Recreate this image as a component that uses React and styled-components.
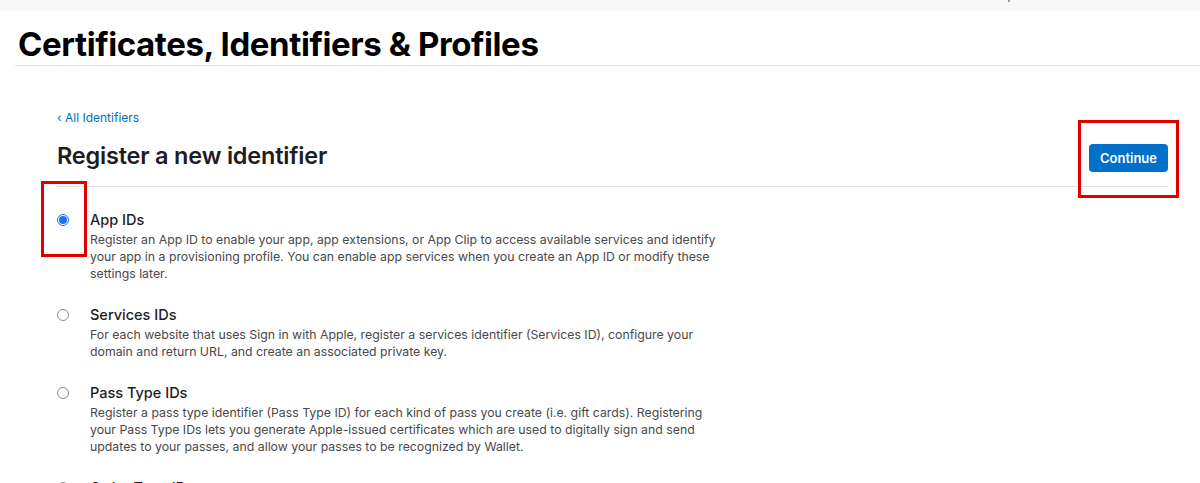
import React from "react";
import styled, { createGlobalStyle } from "styled-components";

const Global = createGlobalStyle`
  html, body { margin: 0; padding: 0; background: #fff; }
  body { font-family: Inter, "Noto Sans", sans-serif; color: #1d1d1f; overflow: hidden; }
  * { box-sizing: border-box; }
`;

const Page = styled.div`
  width: 1200px;
  height: 483px;
  overflow: hidden;
  position: relative;
`;

const TopBar = styled.div`
  height: 10px;
  background: #f8f8f8;
  border-bottom: 1px solid #f2f2f2;
`;

const Header = styled.header`
  margin-left: 15px;
  padding: 14px 0 1px 3px;
  border-bottom: 1px solid #e2e2e2;
`;

const PageTitle = styled.h1`
  margin: 0;
  font-size: 33px;
  line-height: 40px;
  font-weight: 700;
  letter-spacing: -0.4px;
  color: #000;
`;

const Main = styled.main`
  margin: 0 32px 0 57px;
  padding-top: 44px;
`;

const TitleRow = styled.div`
  display: flex;
  align-items: flex-end;
  justify-content: space-between;
  padding-bottom: 16px;
  border-bottom: 1px solid #e2e2e2;
`;

const BackLink = styled.a`
  display: block;
  font-size: 12px;
  line-height: 16px;
  color: #0070c9;
  text-decoration: none;
`;

const SubTitle = styled.h2`
  margin: 16px 0 0;
  font-size: 23.5px;
  line-height: 28px;
  font-weight: 600;
  letter-spacing: -0.2px;
  color: #1d1d1f;
`;

const PrimaryButton = styled.button`
  height: 28px;
  padding: 0 11px;
  margin-bottom: -2px;
  border: none;
  border-radius: 4px;
  background: #0070c9;
  color: #fff;
  font-family: inherit;
  font-size: 13px;
  font-weight: 600;
`;

const OptionList = styled.div`
  display: flex;
  flex-direction: column;
  gap: 24px;
  padding-top: 24px;
`;

const Option = styled.label`
  display: grid;
  grid-template-columns: 33px 1fr;
  align-items: start;
`;

const Radio = styled.span`
  width: 12px;
  height: 12px;
  margin-top: 3px;
  border-radius: 50%;
  border: 1px solid ${(p) => (p.checked ? "#1a73e8" : "#8e8e8e")};
  background: #fff;
  display: flex;
  align-items: center;
  justify-content: center;
  &::after {
    content: "";
    width: 8px;
    height: 8px;
    border-radius: 50%;
    background: ${(p) => (p.checked ? "#1a73e8" : "transparent")};
  }
`;

const OptionBody = styled.div`
  max-width: 640px;
`;

const OptionTitle = styled.div`
  font-size: 14.5px;
  line-height: 18px;
  font-weight: 500;
  color: #1d1d1f;
`;

const OptionDesc = styled.p`
  margin: 2px 0 0;
  font-size: 12.3px;
  line-height: 17px;
  color: #494949;
`;

const Annotation = styled.div`
  position: absolute;
  border: 3px solid #e00000;
  pointer-events: none;
`;

const Marker = styled.span`
  position: absolute;
  top: 0;
  left: 1008px;
  width: 2px;
  height: 2px;
  background: #999;
`;

const options = [
  {
    title: "App IDs",
    desc: "Register an App ID to enable your app, app extensions, or App Clip to access available services and identify your app in a provisioning profile. You can enable app services when you create an App ID or modify these settings later.",
    checked: true,
  },
  {
    title: "Services IDs",
    desc: "For each website that uses Sign in with Apple, register a services identifier (Services ID), configure your domain and return URL, and create an associated private key.",
  },
  {
    title: "Pass Type IDs",
    desc: "Register a pass type identifier (Pass Type ID) for each kind of pass you create (i.e. gift cards). Registering your Pass Type IDs lets you generate Apple-issued certificates which are used to digitally sign and send updates to your passes, and allow your passes to be recognized by Wallet.",
  },
  {
    title: "Order Type IDs",
    desc: "Register an order type identifier (Order Type ID) to enable order tracking in Wallet.",
  },
];

export default function App() {
  return (
    <Page>
      <Global />
      <TopBar />
      <Marker />
      <Header>
        <PageTitle>Certificates, Identifiers &amp; Profiles</PageTitle>
      </Header>
      <Main>
        <TitleRow>
          <div>
            <BackLink href="#">‹ All Identifiers</BackLink>
            <SubTitle>Register a new identifier</SubTitle>
          </div>
          <PrimaryButton>Continue</PrimaryButton>
        </TitleRow>
        <OptionList>
          {options.map((o) => (
            <Option key={o.title}>
              <Radio checked={o.checked} />
              <OptionBody>
                <OptionTitle>{o.title}</OptionTitle>
                <OptionDesc>{o.desc}</OptionDesc>
              </OptionBody>
            </Option>
          ))}
        </OptionList>
      </Main>
      <Annotation style={{ left: 41, top: 181, width: 46, height: 76 }} />
      <Annotation style={{ left: 1078, top: 120, width: 101, height: 78 }} />
    </Page>
  );
}
